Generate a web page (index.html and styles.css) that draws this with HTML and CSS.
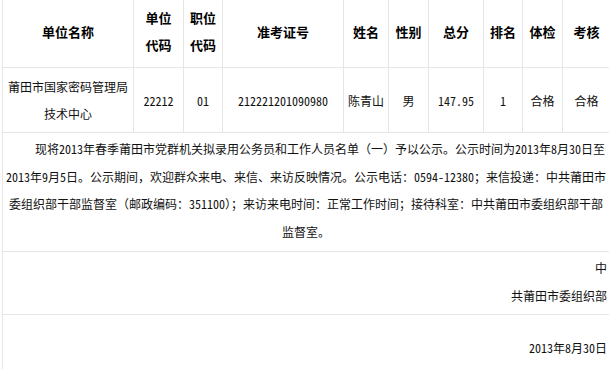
FILE: index.html
```html
<!DOCTYPE html>
<html lang="zh-CN">
<head>
<meta charset="utf-8">
<title>公示</title>
<link rel="stylesheet" href="styles.css">
</head>
<body>
<div class="wrap">
<table class="list">
  <colgroup>
    <col class="c1"><col class="c2"><col class="c3"><col class="c4"><col class="c5">
    <col class="c6"><col class="c7"><col class="c8"><col class="c9"><col class="c10">
  </colgroup>
  <tr class="head">
    <th>单位名称</th>
    <th>单位<br>代码</th>
    <th>职位<br>代码</th>
    <th>准考证号</th>
    <th>姓名</th>
    <th>性别</th>
    <th>总分</th>
    <th>排名</th>
    <th>体检</th>
    <th>考核</th>
  </tr>
  <tr class="data">
    <td>莆田市国家密码管理局<br>技术中心</td>
    <td class="num">22212</td>
    <td class="num">01</td>
    <td class="num">212221201090980</td>
    <td>陈青山</td>
    <td>男</td>
    <td class="num">147.95</td>
    <td class="num">1</td>
    <td>合格</td>
    <td>合格</td>
  </tr>
  <tr>
    <td colspan="10" class="notice">现将<span class="n">2013</span>年春季莆田市党群机关拟录用公务员和工作人员名单（一）予以公示。公示时间为<span class="n">2013</span>年<span class="n">8</span>月<span class="n">30</span>日至<span class="n">2013</span>年<span class="n">9</span>月<span class="n">5</span>日。公示期间，欢迎群众来电、来信、来访反映情况。公示电话：<span class="n">0594-12380</span>；来信投递：中共莆田市委组织部干部监督室（邮政编码：<span class="n">351100</span>）；来访来电时间：正常工作时间；接待科室：中共莆田市委组织部干部监督室。</td>
  </tr>
  <tr>
    <td colspan="10" class="sign">中<br>共莆田市委组织部</td>
  </tr>
  <tr>
    <td colspan="10" class="date"><span class="n">2013</span>年<span class="n">8</span>月<span class="n">30</span>日</td>
  </tr>
</table>
</div>
</body>
</html>
```

FILE: styles.css
```css
html, body {
  margin: 0;
  padding: 0;
  background: #fff;
}
body {
  font-family: "Noto Sans CJK SC", "Noto Sans", sans-serif;
  font-size: 12px;
  color: #111;
  overflow: hidden;
}
.wrap {
  padding-left: 2px;
}
.list {
  border-collapse: collapse;
  table-layout: fixed;
  width: 608px;
  margin-top: -5px;
}
.n,
.num {
  font-feature-settings: "hwid" 1;
}
.c1 { width: 131px; }
.c2 { width: 50px; }
.c3 { width: 39px; }
.c4 { width: 121px; }
.c5 { width: 45px; }
.c6 { width: 40px; }
.c7 { width: 55px; }
.c8 { width: 39px; }
.c9 { width: 40px; }
.c10 { width: 48px; }
.list th,
.list td {
  border: 1px solid #e6e6e6;
  text-align: center;
  vertical-align: middle;
  padding: 0 2px;
}
.head th {
  font-size: 13px;
  font-weight: bold;
  color: #000;
  line-height: 27px;
  padding-top: 8px;
  padding-bottom: 9px;
}
.data td {
  line-height: 27px;
  padding-top: 5px;
  padding-bottom: 5px;
}
.list td.notice {
  text-indent: 28px;
  line-height: 27.7px;
  padding: 2px 3px 5px 2px;
}
.list td.sign {
  text-align: right;
  line-height: 27.7px;
  padding: 2px 3px 5px 2px;
}
.list td.date {
  text-align: right;
  line-height: 27.7px;
  padding: 19px 3px 20px 2px;
}
```
